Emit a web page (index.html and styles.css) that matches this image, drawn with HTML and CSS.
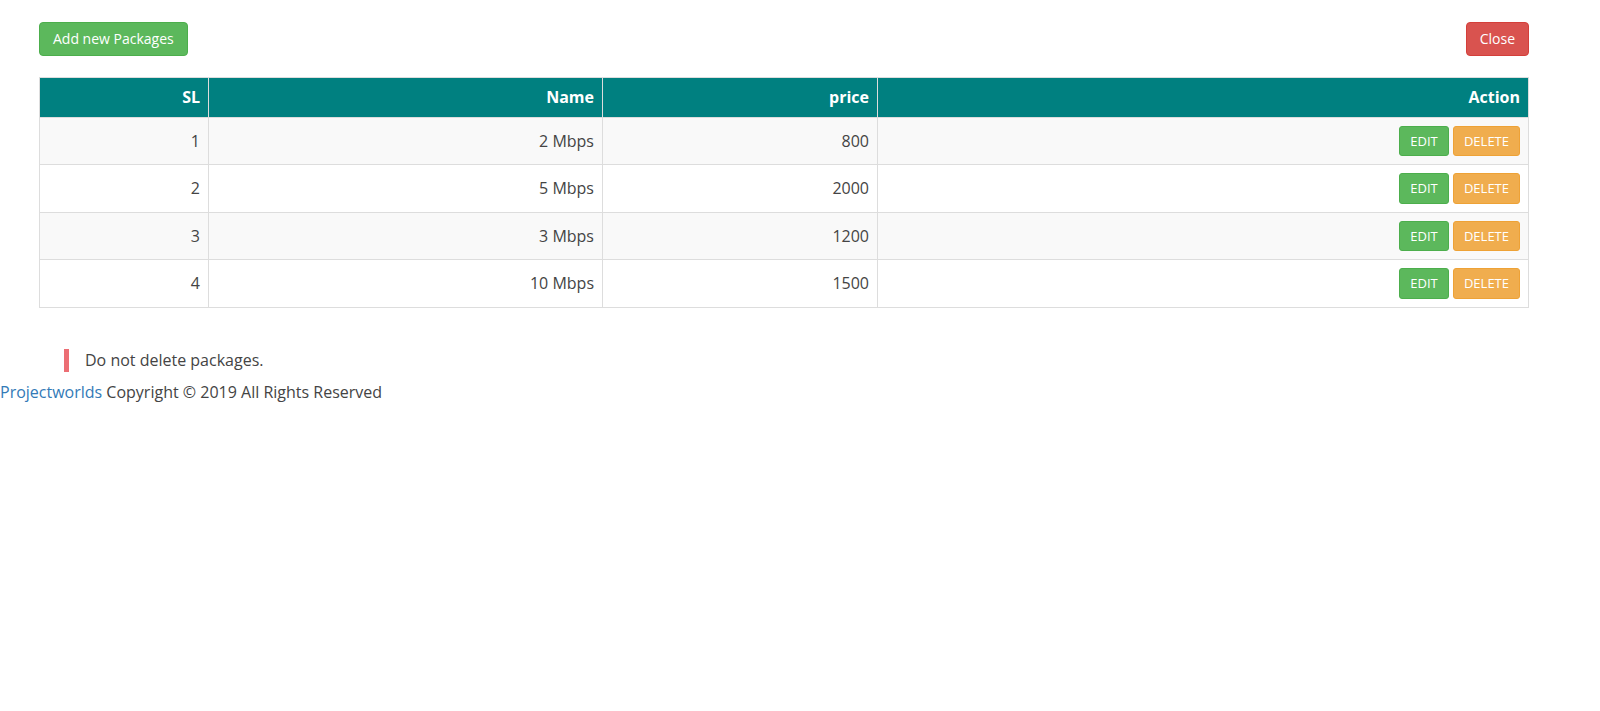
FILE: index.html
```html
<!DOCTYPE html>
<html lang="en">
<head>
  <meta charset="UTF-8" />
  <title>Packages</title>
  <link rel="stylesheet" href="styles.css">
</head>
<body>

  <div class="content">
    <div class="toolbar">
      <button class="btn btn-success">Add new Packages</button>
      <button class="btn btn-danger">Close</button>
    </div>

    <table class="packages">
      <thead>
        <tr>
          <th class="col-sl">SL</th>
          <th class="col-name">Name</th>
          <th class="col-price">price</th>
          <th>Action</th>
        </tr>
      </thead>
      <tbody>
        <tr>
          <td>1</td>
          <td>2 Mbps</td>
          <td>800</td>
          <td><button class="btn btn-sm btn-success">EDIT</button> <button class="btn btn-sm btn-warning">DELETE</button></td>
        </tr>
        <tr>
          <td>2</td>
          <td>5 Mbps</td>
          <td>2000</td>
          <td><button class="btn btn-sm btn-success">EDIT</button> <button class="btn btn-sm btn-warning">DELETE</button></td>
        </tr>
        <tr>
          <td>3</td>
          <td>3 Mbps</td>
          <td>1200</td>
          <td><button class="btn btn-sm btn-success">EDIT</button> <button class="btn btn-sm btn-warning">DELETE</button></td>
        </tr>
        <tr>
          <td>4</td>
          <td>10 Mbps</td>
          <td>1500</td>
          <td><button class="btn btn-sm btn-success">EDIT</button> <button class="btn btn-sm btn-warning">DELETE</button></td>
        </tr>
      </tbody>
    </table>

    <blockquote class="note">Do not delete packages.</blockquote>
  </div>

  <footer class="footer">
    <a href="#">Projectworlds</a> Copyright &copy; 2019 All Rights Reserved
  </footer>

</body>
</html>
```

FILE: styles.css
```css
* {
  box-sizing: border-box;
}

body {
  margin: 0;
  font-family: 'Open Sans', sans-serif;
  font-size: 16px;
  line-height: 1.42857;
  color: #444;
  background: #fff;
}

a {
  color: #337ab7;
  text-decoration: none;
}

.content {
  padding: 22px 71px 0 39px;
}

.toolbar {
  display: flex;
  justify-content: space-between;
  margin-bottom: 21px;
}

.btn {
  display: inline-block;
  font-family: inherit;
  font-size: 14px;
  line-height: 20px;
  padding: 6px 13px;
  border: 1px solid transparent;
  border-radius: 4px;
  color: #fff;
  cursor: pointer;
}

.btn-sm {
  font-size: 13px;
  line-height: 18.5px;
  padding: 5px 10px;
  border-radius: 3px;
}

.btn-success {
  background-color: #5cb85c;
  border-color: #4cae4c;
}

.btn-danger {
  background-color: #d9534f;
  border-color: #d43f3a;
}

.btn-warning {
  background-color: #f0ad4e;
  border-color: #eea236;
}

.packages {
  width: 100%;
  border-collapse: collapse;
  border: 1px solid #ddd;
}

.packages th,
.packages td {
  padding: 8px;
  border: 1px solid #ddd;
  text-align: right;
  vertical-align: middle;
}

.packages th {
  background-color: #008080;
  color: #fff;
  font-weight: bold;
}

.packages tbody tr:nth-child(odd) {
  background-color: #f9f9f9;
}

.col-sl { width: 169px; }
.col-name { width: 394px; }
.col-price { width: 275px; }

.note {
  margin: 41px 0 9px 25px;
  padding: 0 0 0 16px;
  border-left: 5px solid #ec6e74;
}

.footer {
  padding: 0;
}
```
